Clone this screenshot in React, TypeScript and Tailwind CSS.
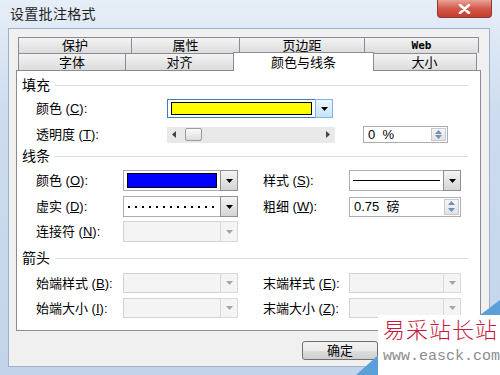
import React from "react";

const F = { fontFamily: '"Liberation Sans", "Noto Sans CJK SC", sans-serif' };

function Tri({ disabled = false }: { disabled?: boolean }) {
  return (
    <svg width="7" height="4" viewBox="0 0 7 4">
      <polygon points="0,0 7,0 3.5,4" fill={disabled ? "#a6a6a6" : "#000"} />
    </svg>
  );
}

function Combo({
  w,
  h = 20,
  children,
  disabled = false,
  active = false,
}: {
  w: string;
  h?: number;
  children?: React.ReactNode;
  disabled?: boolean;
  active?: boolean;
}) {
  return (
    <div
      className={`${w} flex ${
        disabled ? "border-[#d2d2d2] bg-[#f4f4f4]" : active ? "border-[#3c7fb1] bg-white" : "border-[#abadb3] bg-white"
      } border`}
      style={{ height: h }}
    >
      <div className="flex-1 flex items-center px-[3px] min-w-0">{children}</div>
      <div
        className={`w-[18px] flex items-center justify-center border ${
          disabled
            ? "border-[#d9d9d9] bg-[#f4f4f4]"
            : active
            ? "border-[#7eb4ea] bg-[linear-gradient(to_bottom,#eaf6fd,#c7e4f8)]"
            : "border-[#8e8f8f] bg-[linear-gradient(to_bottom,#f4f4f4,#d4d4d4)]"
        } my-[-1px] mr-[-1px]`}
      >
        <Tri disabled={disabled} />
      </div>
    </div>
  );
}

function Spin({ w, text, h = 17 }: { w: string; text: string; h?: number }) {
  return (
    <div className={`${w} flex border border-[#abadb3] bg-white`} style={{ height: h }}>
      <div className="flex-1 flex items-center pl-[4px] text-[13px] leading-none text-black whitespace-pre">{text}</div>
      <div className="w-[15px] my-[1px] mr-[1px] flex flex-col border border-[#c5c9d0] bg-[linear-gradient(to_bottom,#f6f6f6,#e2e2e2)]">
        <div className="flex-1 flex items-center justify-center">
          <svg width="7" height="4" viewBox="0 0 7 4">
            <polygon points="0,4 7,4 3.5,0" fill="#6d8fb8" />
          </svg>
        </div>
        <div className="flex-1 flex items-center justify-center">
          <svg width="7" height="4" viewBox="0 0 7 4">
            <polygon points="0,0 7,0 3.5,4" fill="#6d8fb8" />
          </svg>
        </div>
      </div>
    </div>
  );
}

function Label({ children, w }: { children: React.ReactNode; w: string }) {
  return <div className={`${w} text-[13px] leading-none text-black whitespace-nowrap`}>{children}</div>;
}

function Section({ title }: { title: string }) {
  return (
    <div className="h-[16px] flex items-center pl-[5px] pr-[12px]">
      <span className="text-[14px] leading-none text-black">{title}</span>
      <div className="flex-1 ml-[5px] h-px bg-[#d5dfe5]" />
    </div>
  );
}

function Tab({ w, label, mono = false }: { w: string; label: string; mono?: boolean }) {
  return (
    <div
      className={`${w} h-full flex items-center justify-center border border-[#898c95] border-b-0 -ml-px first:ml-0 bg-[linear-gradient(to_bottom,#f3f3f3,#dcdcdc)] text-[13px] leading-none text-black`}
      style={mono ? { fontFamily: '"DejaVu Sans Mono", monospace', fontWeight: 700, fontSize: 11 } : undefined}
    >
      {label}
    </div>
  );
}

export default function App() {
  return (
    <div
      className="w-[500px] h-[375px] relative overflow-hidden flex flex-col bg-[linear-gradient(to_bottom,#e6eef8,#cddcee_30%,#c3d4ea)]"
      style={F}
    >
      {/* title bar */}
      <div className="h-[28px] flex items-start pl-[10px] pr-[8px]">
        <div className="pt-[6px] text-[14px] leading-[16px] text-[#1e1e1e] tracking-[0.3px]">设置批注格式</div>
        <div className="ml-auto w-[55px] h-[18px] rounded-b-[4px] border border-t-0 border-[#8c3b35] bg-[linear-gradient(to_bottom,#e8a396,#d4594b_50%,#c43c2e)] flex items-center justify-center">
          <svg width="13" height="10" viewBox="0 0 13 10">
            <path d="M2 1 L11 9 M11 1 L2 9" stroke="#ffffff" strokeWidth="2.6" strokeLinecap="round" />
          </svg>
        </div>
      </div>

      {/* client area */}
      <div className="ml-[8px] mr-[10px] mb-[8px] flex-1 bg-[#f0f0f0] border border-[#9fb1c8] flex flex-col pl-[7px] pt-[8px]">
        {/* tabs */}
        <div className="w-[465px] pl-[2px]">
          <div className="h-[16px] flex">
            <Tab w="w-[114px]" label="保护" />
            <Tab w="w-[109px]" label="属性" />
            <Tab w="w-[126px]" label="页边距" />
            <Tab w="w-[115px]" label="Web" mono />
          </div>
          <div className="h-[17px] flex items-end">
            <Tab w="w-[108px]" label="字体" />
            <Tab w="w-[109px]" label="对齐" />
            <div className="w-[141px] h-[19px] -mx-[1px] relative z-10 mb-[-1px] flex items-center justify-center border border-[#898c95] border-b-0 bg-white text-[13px] leading-none text-black">
              颜色与线条
            </div>
            <Tab w="w-[105px]" label="大小" />
          </div>
        </div>

        {/* panel */}
        <div className="w-[465px] h-[261px] border border-[#898c95] bg-white flex flex-col pt-[6px]">
          <Section title="填充" />
          <div className="mt-[6px] h-[19px] flex items-center pl-[19px]">
            <Label w="w-[131px]">
              颜色 (<u>C</u>):
            </Label>
            <Combo w="w-[166px]" h={19} active>
              <div className="w-full h-[13px] bg-[#ffff00] border border-black" />
            </Combo>
          </div>
          <div className="mt-[8px] h-[17px] flex items-center pl-[19px]">
            <Label w="w-[131px]">
              透明度 (<u>T</u>):
            </Label>
            <div className="w-[168px] h-[16px] bg-[#e9e9e9] flex items-center px-[5px]">
              <svg width="4" height="7" viewBox="0 0 4 7">
                <polygon points="4,0 4,7 0,3.5" fill="#444" />
              </svg>
              <div className="ml-[9px] w-[17px] h-[13px] rounded-[2px] border border-[#9a9a9a] bg-[linear-gradient(to_bottom,#fbfbfb,#dcdcdc)]" />
              <div className="flex-1" />
              <svg width="4" height="7" viewBox="0 0 4 7">
                <polygon points="0,0 0,7 4,3.5" fill="#444" />
              </svg>
            </div>
            <div className="ml-[28px]">
              <Spin w="w-[85px]" text="0  %" />
            </div>
          </div>

          <div className="mt-[5px]">
            <Section title="线条" />
          </div>
          <div className="mt-[6px] h-[21px] flex items-center pl-[19px]">
            <Label w="w-[87px]">
              颜色 (<u>O</u>):
            </Label>
            <Combo w="w-[115px]" h={21}>
              <div className="w-full h-[15px] bg-[#0000ff] border border-black" />
            </Combo>
            <Label w="w-[86px] ml-[25px]">
              样式 (<u>S</u>):
            </Label>
            <Combo w="w-[112px]" h={21}>
              <div className="w-full h-px bg-black" />
            </Combo>
          </div>
          <div className="mt-[5px] h-[21px] flex items-center pl-[19px]">
            <Label w="w-[87px]">
              虚实 (<u>D</u>):
            </Label>
            <Combo w="w-[115px]" h={21}>
              <svg width="90" height="4" viewBox="0 0 90 4">
                <line x1="1" y1="2" x2="90" y2="2" stroke="#000" strokeWidth="2" strokeDasharray="2 5" />
              </svg>
            </Combo>
            <Label w="w-[86px] ml-[25px]">
              粗细 (<u>W</u>):
            </Label>
            <Spin w="w-[112px]" h={20} text="0.75  磅" />
          </div>
          <div className="mt-[4px] h-[21px] flex items-center pl-[19px]">
            <Label w="w-[87px]">
              连接符 (<u>N</u>):
            </Label>
            <Combo w="w-[115px]" h={21} disabled />
          </div>

          <div className="mt-[8px]">
            <Section title="箭头" />
          </div>
          <div className="mt-[7px] h-[20px] flex items-center pl-[19px]">
            <Label w="w-[87px]">
              始端样式 (<u>B</u>):
            </Label>
            <Combo w="w-[115px]" h={20} disabled />
            <Label w="w-[86px] ml-[25px]">
              末端样式 (<u>E</u>):
            </Label>
            <Combo w="w-[112px]" h={20} disabled />
          </div>
          <div className="mt-[5px] h-[20px] flex items-center pl-[19px]">
            <Label w="w-[87px]">
              始端大小 (<u>I</u>):
            </Label>
            <Combo w="w-[115px]" h={20} disabled />
            <Label w="w-[86px] ml-[25px]">
              末端大小 (<u>Z</u>):
            </Label>
            <Combo w="w-[112px]" h={20} disabled />
          </div>
        </div>

        {/* buttons */}
        <div className="flex pl-[286px] pt-[10px]">
          <div className="w-[76px] h-[19px] rounded-[3px] border border-[#707070] bg-[linear-gradient(to_bottom,#f2f2f2,#ebebeb_50%,#dddddd_51%,#cfcfcf)] flex items-center justify-center text-[13px] leading-none text-black">
            确定
          </div>
        </div>
      </div>

      {/* watermark overlay */}
      <div className="absolute left-[356px] top-[298px] w-[144px] h-[77px]">
        <svg className="absolute inset-0" width="144" height="77" viewBox="0 0 144 77">
          <polygon points="0,77 30,50 30,77" fill="#5b9fd8" />
          <polygon points="120,20 144,2 144,20" fill="#5b9fd8" />
          <rect x="22" y="17" width="122" height="60" fill="#ffffff" />
        </svg>
        <div className="absolute left-[27px] top-[20px] text-[22px] leading-[26px] tracking-[1px] text-[#c8163c] whitespace-nowrap font-light">
          易采站长站
        </div>
        <div
          className="absolute left-[27px] top-[50px] text-[15px] leading-[18px] text-[#8c8c8c] whitespace-nowrap"
          style={{ fontFamily: '"Liberation Mono", monospace' }}
        >
          www.easck.com
        </div>
      </div>
    </div>
  );
}
